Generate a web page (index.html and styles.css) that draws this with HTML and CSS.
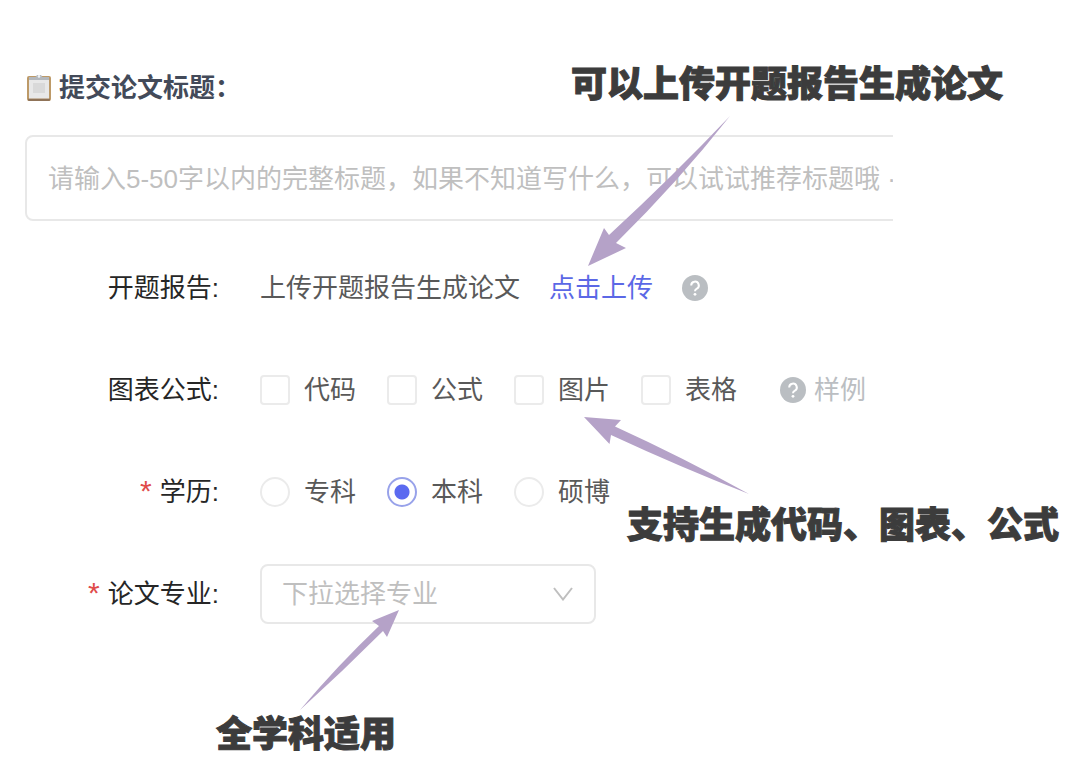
FILE: index.html
```html
<!DOCTYPE html>
<html lang="zh-CN">
<head>
  <meta charset="UTF-8">
  <meta name="viewport" content="width=device-width, initial-scale=1.0">
  <title>提交论文标题</title>
  <link rel="stylesheet" href="styles.css">
</head>
<body>
  <main class="page">
    <form class="paper-form">
      <label class="form-title" for="title">
        <svg class="clipboard" viewBox="0 0 24 28" aria-hidden="true">
          <rect x="0" y="2" width="24" height="25" rx="2" fill="#bd9a68"/>
          <rect x="1" y="24.500" width="22" height="2.500" rx="1" fill="#8f7358"/>
          <rect x="2" y="4" width="20" height="20.500" fill="#e8e8e8"/>
          <rect x="6" y="9" width="12" height="10" fill="#d9d9d9"/>
          <path d="M2 6V3h6.500L10 1h4l1.500 2H22v3z" fill="#b4b8bd"/>
          <circle cx="12" cy="2.400" r="1.300" fill="#eef2f5"/>
        </svg>
        <span>提交论文标题：</span>
      </label>

      <div class="title-box">
        <input type="text" id="title" class="title-input" placeholder="请输入5-50字以内的完整标题，如果不知道写什么，可以试试推荐标题哦 ·">
      </div>

      <div class="row">
        <span class="row-label">开题报告:</span>
        <div class="row-content">
          <span>上传开题报告生成论文</span>
          <a class="upload-link" href="#">点击上传</a>
          <svg class="help" viewBox="0 0 26 26" role="img" aria-label="帮助">
            <circle cx="13" cy="13" r="13" fill="#babec2"/>
            <path d="M9.200 10.500a3.800 3.800 0 1 1 5.700 3.200c-1.300.7-1.900 1.300-1.900 2.600" fill="none" stroke="#fff" stroke-width="2"/>
            <circle cx="13" cy="19.300" r="1.400" fill="#fff"/>
          </svg>
        </div>
      </div>

      <div class="row">
        <span class="row-label">图表公式:</span>
        <div class="row-content options">
          <label class="option"><input type="checkbox" name="extra" value="code">代码</label>
          <label class="option"><input type="checkbox" name="extra" value="formula">公式</label>
          <label class="option"><input type="checkbox" name="extra" value="image">图片</label>
          <label class="option"><input type="checkbox" name="extra" value="table">表格</label>
          <a class="sample" href="#">
            <svg class="help" viewBox="0 0 26 26" aria-hidden="true">
              <circle cx="13" cy="13" r="13" fill="#babec2"/>
              <path d="M9.200 10.500a3.800 3.800 0 1 1 5.700 3.200c-1.300.7-1.900 1.300-1.900 2.600" fill="none" stroke="#fff" stroke-width="2"/>
              <circle cx="13" cy="19.300" r="1.400" fill="#fff"/>
            </svg>
            样例
          </a>
        </div>
      </div>

      <div class="row">
        <span class="row-label"><span class="required">*</span>学历:</span>
        <div class="row-content options">
          <label class="option"><input type="radio" name="degree" value="college">专科</label>
          <label class="option"><input type="radio" name="degree" value="bachelor" checked>本科</label>
          <label class="option"><input type="radio" name="degree" value="master">硕博</label>
        </div>
      </div>

      <div class="row">
        <label class="row-label" for="major"><span class="required">*</span>论文专业:</label>
        <div class="row-content">
          <div class="select-box">
            <select id="major" class="major">
              <option value="">下拉选择专业</option>
            </select>
            <svg class="chevron" viewBox="0 0 20 14" aria-hidden="true">
              <path d="M1 1l9 11.500L19 1" fill="none" stroke="#bfbfbf" stroke-width="2"/>
            </svg>
          </div>
        </div>
      </div>
    </form>

    <!-- notes and arrows over the form -->
    <svg class="arrows" viewBox="0 0 1080 780" aria-hidden="true">
      <path d="M588 266L604 228L609 235Q672 177 730 116Q678 182 616 243L626 248Z"/>
      <path d="M584 417L621 420L615 426.500Q682 457 749 494Q680 467 611 435L609.500 444Z"/>
      <path d="M399 610L372 621L379 626Q337 666 300 710Q342 672 383 631L387 637Z"/>
    </svg>
    <p class="note note-upload">可以上传开题报告生成论文</p>
    <p class="note note-extra">支持生成代码、图表、公式</p>
    <p class="note note-major">全学科适用</p>
  </main>
</body>
</html>
```
FILE: styles.css
```css
* {
  box-sizing: border-box;
}

body {
  margin: 0;
  background-color: #fff;
  color: #595959;
  font-family: "Liberation Sans", "Noto Sans CJK SC", sans-serif;
  font-size: 26px;
  line-height: 40px;
}

.page {
  position: relative;
  min-height: 100vh;
  overflow: hidden;
}

.paper-form {
  padding: 68px 187px 0 25px;
}

.form-title {
  display: flex;
  align-items: center;
  gap: 8px;
  padding-left: 2px;
  color: #434a59;
  font-weight: bold;
}

.clipboard {
  width: 24px;
  height: 28px;
}

/* the input runs on past the right edge of its box */
.title-box {
  display: flex;
  overflow: hidden;
  margin: 27px 0 37px;
}

.title-input {
  flex: none;
  width: calc(100% + 60px);
  height: 86px;
  padding: 2px 21px 0;
  border: 2px solid #e8e8e8;
  border-radius: 8px;
  outline: none;
  font: inherit;
}

.title-input::placeholder {
  color: #bfbfbf;
  opacity: 1;
}

.row {
  display: grid;
  grid-template-columns: 194px 1fr;
  column-gap: 41px;
  align-items: center;
  height: 60px;
  margin-bottom: 42px;
}

.row-label {
  color: #262626;
  text-align: right;
}

.required {
  margin-right: 8px;
  color: #e04b4b;
  font-size: 30px;
  line-height: 1;
}

.row-content {
  display: flex;
  align-items: center;
  gap: 29px;
  white-space: nowrap;
}

.options {
  gap: 31px;
}

.upload-link {
  color: #5b68e6;
  text-decoration: none;
}

.help {
  flex: none;
  width: 26px;
  height: 26px;
}

.option {
  display: flex;
  align-items: center;
  gap: 14px;
}

.option input {
  appearance: none;
  width: 30px;
  height: 30px;
  margin: 0;
  border: 2px solid #ebebeb;
  border-radius: 4px;
  background-color: #fff;
}

.option input[type="radio"] {
  border-radius: 50%;
}

.option input:checked {
  border-color: #98a2ea;
  background: radial-gradient(circle, #5b6af0 7px, #fff 8px);
}

.sample {
  display: flex;
  align-items: center;
  gap: 8px;
  margin-left: 12px;
  color: #bbbec2;
  text-decoration: none;
}

.select-box {
  position: relative;
  width: 336px;
}

.major {
  appearance: none;
  display: block;
  width: 100%;
  height: 60px;
  padding: 0 20px;
  border: 2px solid #e8e8e8;
  border-radius: 8px;
  background-color: #fff;
  color: #bfbfbf;
  font: inherit;
}

.chevron {
  position: absolute;
  top: 23px;
  right: 23px;
  width: 20px;
  height: 14px;
  pointer-events: none;
}

.arrows {
  position: absolute;
  top: 0;
  left: 0;
  width: 1080px;
  height: 780px;
  fill: #b5a2c8;
  pointer-events: none;
}

.note {
  position: absolute;
  margin: 0;
  color: #3c3c3c;
  font-family: "Noto Sans CJK SC", sans-serif;
  font-size: 36px;
  font-weight: 900;
  line-height: 48px;
  white-space: nowrap;
  -webkit-text-stroke: 1px #3c3c3c;
}

.note-upload {
  top: 57px;
  left: 571px;
}

.note-extra {
  top: 498px;
  left: 627px;
}

.note-major {
  top: 707px;
  left: 216px;
}
```
